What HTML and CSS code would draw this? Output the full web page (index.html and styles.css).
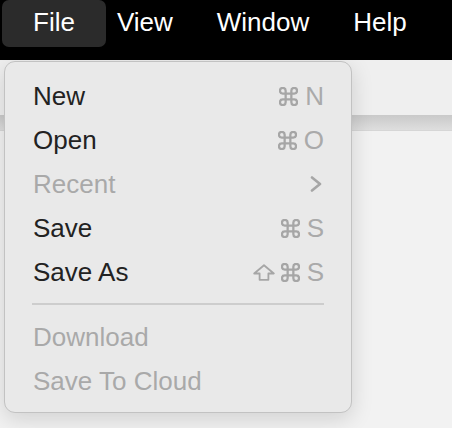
FILE: index.html
```html
<!DOCTYPE html>
<html lang="en">
<head>
  <meta charset="UTF-8" />
  <meta name="viewport" content="width=device-width, initial-scale=1.0" />
  <title>File Menu</title>
  <link rel="stylesheet" href="styles.css">
</head>
<body>
  <header class="menubar">
    <div class="menubar-item active">File</div>
    <div class="menubar-item">View</div>
    <div class="menubar-item">Window</div>
    <div class="menubar-item">Help</div>
  </header>

  <div class="toolbar"></div>
  <div class="toolbar-edge"></div>
  <main class="content"></main>

  <div class="menu">
    <div class="menu-row">
      <span class="label">New</span>
      <span class="keys">
        <svg class="cmd" viewBox="2 2 20 20"><path d="M15 6v12a3 3 0 1 0 3-3H6a3 3 0 1 0 3 3V6a3 3 0 1 0-3 3h12a3 3 0 1 0-3-3"/></svg>
        <span>N</span>
      </span>
    </div>
    <div class="menu-row">
      <span class="label">Open</span>
      <span class="keys">
        <svg class="cmd" viewBox="2 2 20 20"><path d="M15 6v12a3 3 0 1 0 3-3H6a3 3 0 1 0 3 3V6a3 3 0 1 0-3 3h12a3 3 0 1 0-3-3"/></svg>
        <span>O</span>
      </span>
    </div>
    <div class="menu-row disabled">
      <span class="label">Recent</span>
      <span class="keys">
        <svg class="chevron" viewBox="0 0 12 16"><path d="M2 1.5l8 6.5-8 6.5"/></svg>
      </span>
    </div>
    <div class="menu-row">
      <span class="label">Save</span>
      <span class="keys">
        <svg class="cmd" viewBox="2 2 20 20"><path d="M15 6v12a3 3 0 1 0 3-3H6a3 3 0 1 0 3 3V6a3 3 0 1 0-3 3h12a3 3 0 1 0-3-3"/></svg>
        <span>S</span>
      </span>
    </div>
    <div class="menu-row">
      <span class="label">Save As</span>
      <span class="keys">
        <svg class="shift" viewBox="0 0 22 17"><path d="M11 1.2L20.8 9.5H15.4V15.8H6.6V9.5H1.2Z"/></svg>
        <svg class="cmd" viewBox="2 2 20 20"><path d="M15 6v12a3 3 0 1 0 3-3H6a3 3 0 1 0 3 3V6a3 3 0 1 0-3 3h12a3 3 0 1 0-3-3"/></svg>
        <span>S</span>
      </span>
    </div>

    <div class="separator"></div>

    <div class="menu-row disabled">
      <span class="label">Download</span>
    </div>
    <div class="menu-row disabled">
      <span class="label">Save To Cloud</span>
    </div>
  </div>
</body>
</html>
```

FILE: styles.css
```css
* {
  box-sizing: border-box;
}

body {
  margin: 0;
  font-family: "Liberation Sans", Arial, sans-serif;
  background: #f2f2f2;
  min-height: 100vh;
}

.menubar {
  display: flex;
  align-items: flex-start;
  height: 60px;
  padding-left: 2px;
  background: #000;
  color: #fff;
  font-size: 26px;
}

.menubar-item {
  height: 47px;
  line-height: 44px;
  padding: 0 22px;
}

.menubar-item.active {
  padding: 0 31px;
  margin-right: -11px;
  background: #2b2b2b;
  border-radius: 7px;
}

.toolbar {
  height: 55px;
  background: #efefef;
}

.toolbar-edge {
  height: 16px;
  background: linear-gradient(#c9c9c9, #dedede);
  border-bottom: 1px solid #d6d6d6;
}

.content {
  background: #f2f2f2;
}

.menu {
  position: absolute;
  top: 61px;
  left: 4px;
  width: 348px;
  padding: 12px 0 9px;
  background: #e9e9e9;
  border: 1px solid #c2c2c2;
  border-radius: 11px;
  box-shadow: 0 6px 22px rgba(0, 0, 0, 0.14);
  font-size: 26px;
  color: #222;
}

.menu-row {
  display: flex;
  align-items: center;
  justify-content: space-between;
  height: 44px;
  padding: 0 27px 0 28px;
}

.menu-row.disabled {
  color: #a9a9a9;
}

.keys {
  display: flex;
  align-items: center;
  color: #aaa;
}

.keys span {
  margin-left: 7px;
}

.keys svg {
  fill: none;
  stroke: #a6a6a6;
  stroke-linecap: round;
  stroke-linejoin: round;
}

.cmd {
  width: 19px;
  height: 19px;
  stroke-width: 2.4;
}

.shift {
  width: 22px;
  height: 17px;
  margin-right: 6px;
  stroke-width: 1.8;
}

.chevron {
  width: 12px;
  height: 16px;
  margin-right: 2px;
  stroke-width: 2.6;
}

.separator {
  height: 2px;
  margin: 9px 27px 10px 27px;
  background: #cdcdcd;
}
```
